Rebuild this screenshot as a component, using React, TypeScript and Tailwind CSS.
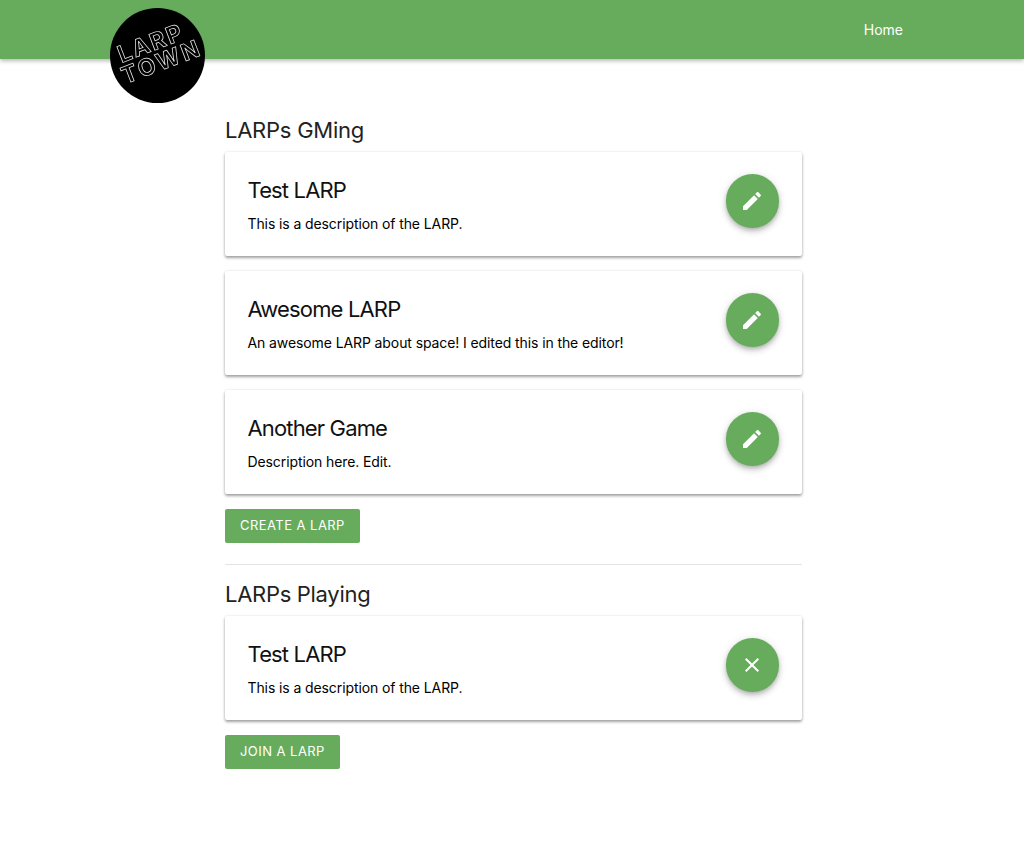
import React from "react";

const FAB_SHADOW = "shadow-[0_2px_4px_-1px_rgba(0,0,0,0.2),0_4px_6px_0_rgba(0,0,0,0.14),0_1px_10px_0_rgba(0,0,0,0.1)]";

function Pencil() {
  return (
    <svg viewBox="0 0 24 24" className="w-6 h-6" fill="white">
      <path d="M3 17.25V21h3.75L17.81 9.94l-3.75-3.75L3 17.25zM20.71 7.04c.39-.39.39-1.02 0-1.41l-2.34-2.34c-.39-.39-1.02-.39-1.41 0l-1.83 1.83 3.75 3.75 1.83-1.83z" />
    </svg>
  );
}

function Close() {
  return (
    <svg viewBox="0 0 24 24" className="w-6 h-6" fill="white">
      <path d="M19 6.41 17.59 5 12 10.59 6.41 5 5 6.41 10.59 12 5 17.59 6.41 19 12 13.41 17.59 19 19 17.59 13.41 12z" />
    </svg>
  );
}

function Card({ title, text, icon }: { title: string; text: string; icon: React.ReactNode }) {
  return (
    <div className="flex items-start justify-between h-[104px] bg-white rounded-[2px] pl-[22.5px] pr-[23px] shadow-[0_2px_3px_0_rgba(0,0,0,0.35),0_0_3px_0_rgba(0,0,0,0.1)]">
      <div className="flex flex-col pt-[23px]">
        <div className="text-[22px] leading-[30px] tracking-[-0.85px] text-[#111]">{title}</div>
        <div className="mt-[9px] text-[14px] leading-[20px] tracking-[-0.1px] text-black">{text}</div>
      </div>
      <div className={`mt-[22px] flex items-center justify-center w-[53.5px] h-[54px] rounded-full bg-[#66ac5c] ${FAB_SHADOW}`}>{icon}</div>
    </div>
  );
}

function Button({ label }: { label: string }) {
  return (
    <div className="mt-[15px] inline-flex self-start items-center h-[34px] px-[15px] rounded-[2px] bg-[#66ac5c] text-white text-[13px] tracking-[0.45px]">
      {label}
    </div>
  );
}

export default function App() {
  return (
    <div className="relative min-h-[841px] bg-white font-['Inter',sans-serif]">
      <header className="flex items-center justify-end h-[59px] pr-[121px] bg-[#66ac5c] shadow-[0_2px_4px_0_rgba(0,0,0,0.28)]">
        <span className="text-white text-[14px]">Home</span>
      </header>
      <svg viewBox="0 0 96 96" className="absolute left-[110px] top-[8px] w-[95px] h-[95px] will-change-transform">
        <circle cx="48" cy="48" r="48" fill="black" />
        <g transform="rotate(-21 48 48)" fill="black" stroke="#f2f2f2" strokeWidth="0.7" fontFamily="Inter, sans-serif" fontWeight="700" textAnchor="middle">
          <text x="46" y="42" fontSize="23.5" letterSpacing="2">LARP</text>
          <text x="49.5" y="63.5" fontSize="23.5" letterSpacing="2.5">TOWN</text>
        </g>
      </svg>
      <main className="flex flex-col w-[577px] ml-[225px] pt-[57px]">
        <h2 className="text-[22px] leading-[28px] tracking-[-0.25px] text-[#222] mb-[8px]">LARPs GMing</h2>
        <div className="flex flex-col gap-[15px]">
          <Card title="Test LARP" text="This is a description of the LARP." icon={<Pencil />} />
          <Card title="Awesome LARP" text="An awesome LARP about space! I edited this in the editor!" icon={<Pencil />} />
          <Card title="Another Game" text="Description here. Edit." icon={<Pencil />} />
        </div>
        <Button label="CREATE A LARP" />
        <div className="mt-[21px] border-t border-[#e4e4e4]" />
        <h2 className="mt-[15px] text-[22px] leading-[28px] tracking-[-0.3px] text-[#222] mb-[8px]">LARPs Playing</h2>
        <Card title="Test LARP" text="This is a description of the LARP." icon={<Close />} />
        <Button label="JOIN A LARP" />
      </main>
    </div>
  );
}
